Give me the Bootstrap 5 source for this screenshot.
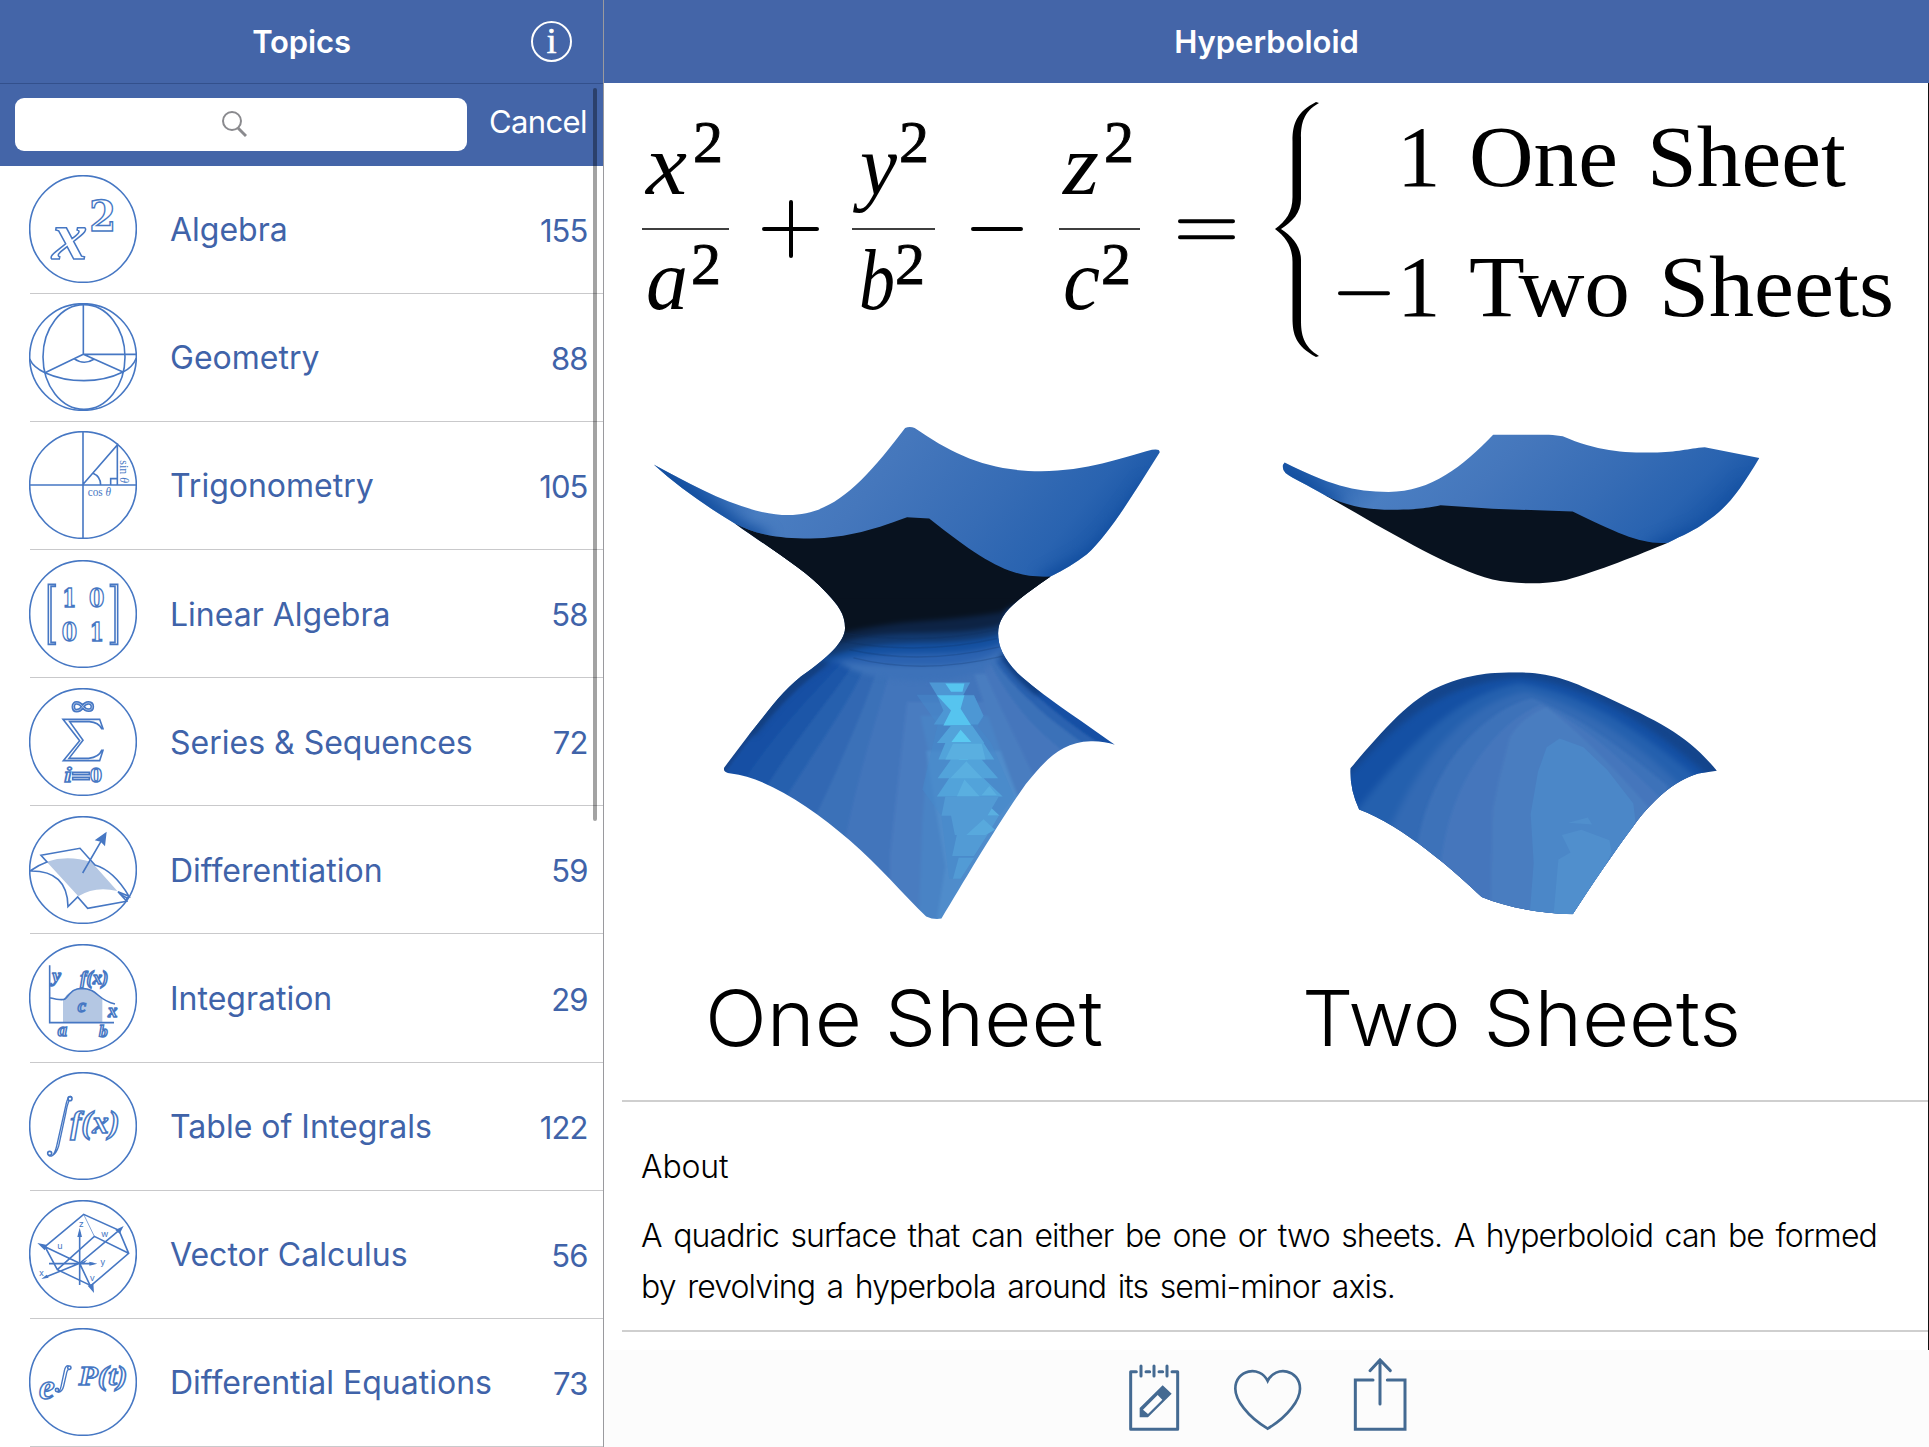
<!DOCTYPE html>
<html lang="en">
<head>
<meta charset="utf-8">
<meta name="viewport" content="width=device-width, initial-scale=1">
<title>Hyperboloid</title>
<link href="https://cdn.jsdelivr.net/npm/bootstrap@5.3.0/dist/css/bootstrap.min.css" rel="stylesheet">
<style>
  :root { --bar: #4465a8; --ink: #4063a9; --line: #c9c9cb; --tool: #446a92; }
  body { font-family: Inter, "Liberation Sans", sans-serif; background: #fff; height: 1447px; overflow: hidden; }
  .topics-pane { width: 604px; border-right: 1px solid #9a9a9e; }
  .top-bar { height: 83px; background: var(--bar); color: #fff; font-size: 31px; font-weight: 600; line-height: 1; }
  .topics-pane .top-bar { letter-spacing: -.15px; }
  .detail-pane .top-bar { letter-spacing: 0; }
  .info-btn { right: 30px; top: 20px; width: 43px; height: 43px; }
  .search-bar { height: 83px; background: var(--bar); border-top: 1px solid #33508c; padding: 0 16px 0 15px; }
  .search-field { width: 452px; height: 53px; border-radius: 9px; margin-top: -1px; padding-right: 14px; }
  .cancel-link { font-size: 31px; letter-spacing: -.6px; line-height: 1; padding-bottom: 6px; }
  .topic-row { height: 128.15px; margin-left: 30px; padding-right: 15.5px; border-bottom: 1px solid var(--line); color: var(--ink); font-size: 32px; line-height: 1; }
  .topic-name, .topic-count { padding-top: 2px; }
  .topic-icon { width: 108px; height: 108px; margin: 0 33px 0 -1px; fill: none; stroke: #4677c3; stroke-width: 4.8; flex: none; }
  .topic-icon text { font-family: "DejaVu Serif", serif; stroke-width: 4.5; }
  .topic-icon .bold-num { font-weight: bold; }
  .topic-icon .it { font-family: "Liberation Serif", serif; font-style: italic; font-weight: bold; }
  .topic-icon .solid { fill: #4677c3; stroke: none; font-weight: normal; }
  .topic-icon .serif-label { font-family: "Liberation Serif", serif; }
  .topic-icon .axis-label { font-family: Inter, sans-serif; }
  .topic-icon .tint { fill: #b4c7e3; stroke: none; }
  .topic-count { font-size: 31px; letter-spacing: -.9px; }
  .scroll-thumb { left: 593px; top: 88px; width: 4px; height: 733px; border-radius: 2px; background: rgba(0,0,0,.36); }
  .page-body { border-right: 1px solid #111; height: 1267px; }
  .figure-box { height: 1017px; }
  .about-box { margin-left: 18px; height: 232px; border-top: 2px solid #cfcfcf; border-bottom: 2px solid #cfcfcf; padding: 39px 0 0 19px; color: #000; font-weight: 300; font-size: 32px; line-height: 51px; white-space: nowrap; }
  .about-box h2 { font-size: 32px; font-weight: 300; line-height: 51px; margin-bottom: 18px; letter-spacing: -.15px; }
  .about-box p { letter-spacing: -.9px; word-spacing: 3.4px; }
  .tool-bar { height: 97px; background: #fcfcfc; padding: 0 0 7px 13px; }
  .tool-bar svg { fill: none; stroke: var(--tool); stroke-width: 9; stroke-linecap: round; stroke-linejoin: round; }
  .math text { font-family: "Liberation Serif", serif; font-size: 87px; fill: #000; }
  .math .var { font-style: italic; }
  .math .sup { font-size: 60px; stroke: #000; stroke-width: .9; }
  .caption-text { font-family: Inter, sans-serif; font-weight: 300; font-size: 77px; }
</style>
</head>
<body class="d-flex">

<aside class="topics-pane position-relative flex-shrink-0 d-flex flex-column">
  <header class="top-bar position-relative d-flex align-items-center justify-content-center">
    <span>Topics</span>
    <svg class="info-btn position-absolute" viewBox="0 0 43 43" fill="none" stroke="#fff" stroke-width="2"><circle cx="21.500" cy="21.500" r="19.500"/><text x="21.500" y="32.500" text-anchor="middle" font-family="Liberation Serif, serif" font-size="35" font-weight="400" fill="#fff" stroke="#fff" stroke-width=".7">i</text></svg>
  </header>
  <div class="search-bar d-flex align-items-center justify-content-between">
    <div class="search-field bg-white d-flex align-items-center justify-content-center">
      <svg width="26" height="28" viewBox="0 0 26 28" fill="none" stroke="#8a8a8e"><circle cx="11" cy="11" r="9" stroke-width="2"/><path d="M17 18l8 8" stroke-width="3"/></svg>
    </div>
    <span class="cancel-link text-white">Cancel</span>
  </div>
  <div class="topic-list">
    <div class="topic-row d-flex align-items-center">
      <svg class="topic-icon" viewBox="87 47 324 324"><circle cx="249" cy="209" r="160"/><text class="it" x="156" y="299" font-size="205" textLength="106" lengthAdjust="spacingAndGlyphs">x</text><text class="bold-num" x="268" y="215" font-size="128" textLength="80" lengthAdjust="spacingAndGlyphs">2</text></svg>
      <span class="topic-name flex-grow-1">Algebra</span><span class="topic-count">155</span>
    </div>
    <div class="topic-row d-flex align-items-center">
      <svg class="topic-icon" viewBox="87 432 324 324"><circle cx="249" cy="594" r="160"/><ellipse cx="252" cy="594" rx="123" ry="157"/><path d="M89 600Q100 625 135 641Q188 665 252 665T369 639Q398 625 409 597M250 437V586H409M250 586L135 641M250 586L369 639M222 599Q252 620 283 600"/></svg>
      <span class="topic-name flex-grow-1">Geometry</span><span class="topic-count">88</span>
    </div>
    <div class="topic-row d-flex align-items-center">
      <svg class="topic-icon" viewBox="87 816 324 324"><circle cx="249" cy="978" r="160"/><path d="M249 818V1138M89 978H409M250 975L352 858V978M279 943Q302 953 302 978M332 978V959H352"/><text class="solid serif-label" x="263" y="1011" font-size="36" textLength="70" lengthAdjust="spacingAndGlyphs">cos <tspan font-style="italic">θ</tspan></text><text class="solid serif-label" transform="translate(361 904) rotate(90)" font-size="36" textLength="68" lengthAdjust="spacingAndGlyphs">sin <tspan font-style="italic">θ</tspan></text></svg>
      <span class="topic-name flex-grow-1">Trigonometry</span><span class="topic-count">105</span>
    </div>
    <div class="topic-row d-flex align-items-center">
      <svg class="topic-icon" viewBox="87 30 324 324"><circle cx="249" cy="192" r="160"/><path d="M166 103H145V283H166V277H153V109H166ZM331 103H353V283H331V277H345V109H331Z"/><g font-size="80"><text class="bold-num" x="187" y="171" textLength="42" lengthAdjust="spacingAndGlyphs">1</text><text class="bold-num" x="267" y="171" textLength="46" lengthAdjust="spacingAndGlyphs">0</text><text class="bold-num" x="185" y="273" textLength="46" lengthAdjust="spacingAndGlyphs">0</text><text class="bold-num" x="269" y="273" textLength="42" lengthAdjust="spacingAndGlyphs">1</text></g></svg>
      <span class="topic-name flex-grow-1">Linear Algebra</span><span class="topic-count">58</span>
    </div>
    <div class="topic-row d-flex align-items-center">
      <svg class="topic-icon" viewBox="87 415 324 324"><circle cx="249" cy="577" r="160"/><path d="M189 509H299L309 537H305Q296 518 268 516H209L249 572L207 626H266Q297 622 305 602H309L299 633H190L239 573Z"/><path d="M248 471C238 457 220 455 220 471S238 487 248 471S277 457 277 471S258 485 248 471Z" stroke-width="11"/><path d="M248 471C238 457 220 455 220 471S238 487 248 471S277 457 277 471S258 485 248 471Z" stroke="#c9d8ef" stroke-width="2"/><text class="it" x="193" y="697" font-size="66" textLength="22" lengthAdjust="spacingAndGlyphs">i</text><path d="M218 668H268V675H218ZM218 683H268V690H218Z"/><text class="bold-num" x="270" y="697" font-size="58" textLength="36" lengthAdjust="spacingAndGlyphs">0</text></svg>
      <span class="topic-name flex-grow-1">Series &amp; Sequences</span><span class="topic-count">72</span>
    </div>
    <div class="topic-row d-flex align-items-center">
      <svg class="topic-icon" viewBox="87 799 324 324"><circle cx="249" cy="961" r="160"/><path class="tint" d="M140 936Q205 915 275 938L352 1024Q285 1008 235 1040Z"/><path d="M90 964Q115 946 141 937L123 917L240 896L285 946Q342 963 387 1040L354 1026L380 1055L263 1076L233 1042L204 1071Q203 962 90 964M387 1040L376 1053M358 1032L384 1047M248 970L306 870"/><path class="solid" d="M320 846L315 890L302 876L284 872Z"/></svg>
      <span class="topic-name flex-grow-1">Differentiation</span><span class="topic-count">59</span>
    </div>
    <div class="topic-row d-flex align-items-center">
      <svg class="topic-icon" viewBox="87 44 324 324"><circle cx="249" cy="206" r="160"/><path class="tint" d="M189 280V211Q215 175 245 177Q280 178 307 207V280Z"/><path d="M149 108V280H342M149 205Q185 214 195 209C215 188 220 178 245 177C295 178 290 212 345 224"/><text class="it" x="157" y="157" font-size="58">y</text><text class="it" x="241" y="164" font-size="54" textLength="84" lengthAdjust="spacingAndGlyphs">f(x)</text><text class="it" x="233" y="248" font-size="56">c</text><text class="it" x="324" y="263" font-size="56">x</text><text class="it" x="173" y="320" font-size="56">a</text><text class="it" x="297" y="324" font-size="52">b</text></svg>
      <span class="topic-name flex-grow-1">Integration</span><span class="topic-count">29</span>
    </div>
    <div class="topic-row d-flex align-items-center">
      <svg class="topic-icon" viewBox="87 428 324 324"><circle cx="249" cy="590" r="160"/><path d="M207 503Q201 510 197 530L170 650Q164 676 155 680Q148 682 145 676M207 515Q202 525 198 548L176 650Q169 673 157 678M207 503Q213 499 215 505" stroke-width="4"/><circle cx="210" cy="508" r="6"/><circle cx="149" cy="672" r="6"/><text class="it" x="211" y="612" font-size="94" textLength="148" lengthAdjust="spacingAndGlyphs">f(x)</text></svg>
      <span class="topic-name flex-grow-1">Table of Integrals</span><span class="topic-count">122</span>
    </div>
    <div class="topic-row d-flex align-items-center">
      <svg class="topic-icon" viewBox="87 813 324 324"><circle cx="249" cy="975" r="160"/><path d="M135 953L251 856L357 904L386 973L273 1070L172 1022L135 953L239 1003L357 904M172 1022L283 922L386 973"/><path d="M251 856L283 922" stroke-width="2"/><path d="M239 1068V910M147 1004H280M239 1003L135 1045M239 1003L273 1075"/><path class="solid" d="M239 896L246 924H232ZM112 942L142 948L134 964ZM371 891L359 914L346 903ZM292 1004L268 998V1010ZM124 1050L140 1037L146 1046ZM282 1092L263 1070L280 1063ZM239 1003L262 992L250 1006Z"/><g font-size="27"><text class="solid axis-label" x="236" y="893">z</text><text class="solid axis-label" x="303" y="924">w</text><text class="solid axis-label" x="172" y="960">u</text><text class="solid axis-label" x="301" y="1008">y</text><text class="solid axis-label" x="117" y="1040">x</text><text class="solid axis-label" x="269" y="1055">v</text></g></svg>
      <span class="topic-name flex-grow-1">Vector Calculus</span><span class="topic-count">56</span>
    </div>
    <div class="topic-row d-flex align-items-center">
      <svg class="topic-icon" viewBox="87 1196 324 324"><circle cx="249" cy="1358" r="160"/><text class="it" x="117" y="1408" font-size="106">e</text><path d="M206 1309Q196 1308 193 1325L183 1372Q180 1387 171 1388M206 1320Q201 1322 199 1335L191 1370Q187 1388 174 1389" stroke-width="4"/><circle cx="208" cy="1315" r="5"/><circle cx="171" cy="1382" r="5"/><text class="it" x="236" y="1368" font-size="82" textLength="146" lengthAdjust="spacingAndGlyphs">P(t)</text></svg>
      <span class="topic-name flex-grow-1">Differential Equations</span><span class="topic-count">73</span>
    </div>
  </div>
  <div class="scroll-thumb position-absolute"></div>
</aside>

<main class="detail-pane flex-grow-1 d-flex flex-column">
  <header class="top-bar d-flex align-items-center justify-content-center"><span>Hyperboloid</span></header>
  <div class="page-body">
    <svg class="figure-box d-block" width="1324" height="1017" viewBox="604 83 1324 1017">
      <defs>
        <linearGradient id="bowl" x1="0" x2="1" y1="0" y2=".25"><stop offset="0" stop-color="#1450a4"/><stop offset=".16" stop-color="#2560ae"/><stop offset=".33" stop-color="#4a7ec2"/><stop offset=".5" stop-color="#4577bc"/><stop offset=".75" stop-color="#366cb5"/><stop offset=".92" stop-color="#2963b0"/><stop offset="1" stop-color="#1d59a9"/></linearGradient>
        <filter id="fine" x="-5%" y="-5%" width="110%" height="110%"><feGaussianBlur stdDeviation="3.500"/></filter>
        <filter id="soft" x="-20%" y="-20%" width="140%" height="140%" color-interpolation-filters="sRGB"><feGaussianBlur stdDeviation="8"/></filter>
        <filter id="wide" x="-40%" y="-40%" width="180%" height="180%" color-interpolation-filters="sRGB"><feGaussianBlur stdDeviation="20"/></filter>
        <clipPath id="body1"><path d="M300 352C400 430 480 480 540 550C570 585 588 610 588 650C588 690 540 735 490 775C430 820 400 870 340 950L272 1048Q268 1062 290 1065C380 1075 500 1160 600 1255C680 1330 740 1410 800 1472Q820 1482 840 1478C900 1370 980 1220 1060 1095C1110 1030 1150 975 1230 973Q1265 972 1293 983C1200 910 1100 840 1040 780C1000 735 988 700 988 665C988 610 1030 575 1125 503L808 330L750 330Z"/></clipPath>
        <clipPath id="bowl1"><path d="M88 184C200 250 330 328 440 328C560 328 640 230 745 80Q757 74 770 80C870 155 960 203 1100 203C1220 203 1310 165 1390 142Q1412 138 1410 150C1340 270 1280 380 1220 440C1190 465 1160 485 1125 503C1030 510 960 470 808 338L750 334C650 375 580 395 480 395C400 393 350 380 300 352C220 300 150 245 88 184Z"/></clipPath>
        <clipPath id="bowl2"><path d="M80 178C180 240 240 262 320 262C420 260 490 190 562 98H690L722 103C800 145 860 150 930 150C990 150 1010 138 1050 135L1176 165C1130 260 1100 310 1050 350C1030 370 1000 385 965 407C900 412 850 380 745 318L560 310L440 300C400 310 380 313 310 313C260 310 220 300 175 273C130 240 100 225 82 208Q70 190 80 178Z"/></clipPath>
        <clipPath id="dome"><path d="M232 1050C300 950 370 850 440 815C510 780 560 776 620 776C700 778 740 800 820 845C950 920 1010 955 1078 1057L1035 1065C980 1085 930 1140 885 1215C840 1290 790 1380 745 1466C680 1464 600 1450 535 1417C480 1350 350 1210 252 1167Q230 1110 232 1050Z"/></clipPath>
      </defs>

      <!-- equation -->
      <g class="math">
        <text class="var" x="646" y="194" textLength="41" lengthAdjust="spacingAndGlyphs">x</text><text class="sup" x="693" y="162">2</text>
        <text class="var" x="646" y="309" textLength="42" lengthAdjust="spacingAndGlyphs">a</text><text class="sup" x="691" y="284">2</text>
        <text class="var" x="860" y="194" textLength="37" lengthAdjust="spacingAndGlyphs">y</text><text class="sup" x="899" y="162">2</text>
        <text class="var" x="859" y="309" textLength="36" lengthAdjust="spacingAndGlyphs">b</text><text class="sup" x="895" y="284">2</text>
        <text class="var" x="1063" y="194" textLength="36" lengthAdjust="spacingAndGlyphs">z</text><text class="sup" x="1104" y="162">2</text>
        <text class="var" x="1063" y="309" textLength="37" lengthAdjust="spacingAndGlyphs">c</text><text class="sup" x="1101" y="284">2</text>
        <g stroke="#000" fill="none"><path d="M642 229H729M852 229H935M1059 229H1140" stroke-width="1.600"/><path d="M764 229H817M791 202V256M973 229H1021M1180 221.300H1233M1180 237.300H1233M1340 293.300H1388" stroke-width="4" stroke-linecap="round"/></g>
        <path d="M1319 103C1303 112 1301 124 1301 138V199C1301 213 1292 222 1281 229C1292 236 1301 246 1301 260V320C1301 334 1303 346 1319 356L1316 357C1296 346 1292.500 335 1292.500 318V262C1292.500 247 1286 237 1275 229C1286 221 1292.500 212 1292.500 197V141C1292.500 123 1297 112 1316 102Z"/>
        <text x="1397" y="186">1</text><text x="1397" y="316">1</text>
        <text x="1469" y="186" textLength="149" lengthAdjust="spacingAndGlyphs">One</text><text x="1647" y="186" textLength="199" lengthAdjust="spacingAndGlyphs">Sheet</text>
        <text x="1469" y="316" textLength="161" lengthAdjust="spacingAndGlyphs">Two</text><text x="1659" y="316" textLength="235" lengthAdjust="spacingAndGlyphs">Sheets</text>
      </g>

      <!-- hyperboloid of one sheet -->
      <g transform="translate(620 400) scale(.3827 .3508)">
        <g clip-path="url(#body1)">
          <g filter="url(#fine)" color-interpolation-filters="sRGB">
          <path fill="#14458c" d="M200 300H1400V1500H200Z"/>
          <path fill="#1450a4" d="M600 690C540 760 400 860 270 1070V1500H1400V690Z"/>
          <path fill="#1c56a8" d="M615 690C590 760 470 850 320 1090V1500H1400V690Z"/>
          <path fill="#2660ae" d="M635 690C615 780 510 880 370 1125V1500H1400V690Z"/>
          <path fill="#3068b3" d="M660 690C640 800 550 930 420 1155V1500H1400V690Z"/>
          <path fill="#3b71b8" d="M690 690C670 800 600 980 505 1200V1500H1400V690Z"/>
          <path fill="#4275bb" d="M720 690C710 800 630 1000 580 1300V1500H1400V690Z"/>
          <path fill="#487cc0" d="M750 860C740 950 725 1100 705 1300V1500H1400V860Z"/>
          <path fill="#4a83c5" d="M785 900L805 1000L790 1200L780 1500H1400V900Z"/>
          <path fill="#508ccb" d="M800 1000L830 1200L850 1330L825 1500H1400V1000Z"/>
          <path fill="#497dc0" d="M925 780C960 900 1000 1020 1040 1130L1400 1200V780Z"/>
          <path fill="#4476bc" d="M940 740C980 850 1030 950 1080 1070H1400V740Z"/>
          <path fill="#3b71b8" d="M955 720C1000 830 1070 930 1170 1010H1400V720Z"/>
          <path fill="#2962b0" d="M965 720C1020 820 1130 920 1220 985H1400V720Z"/>
          <path fill="#1450a4" d="M980 710C1040 810 1150 905 1260 985H1400V710Z"/>
          </g>
          <g filter="url(#soft)">
            <path fill="none" stroke="#123f80" stroke-width="24" d="M580 700Q540 745 490 778C430 822 400 872 340 952M995 710Q1030 780 1100 835"/>
            <path fill="#3d72b9" d="M560 560H1010V710Q960 800 790 800T560 735Z"/>
            <path fill="#2b62b0" d="M560 560H1010V700Q960 757 790 757T540 745Z"/>
            <path fill="#1450a0" d="M560 560H1010V685Q960 722 790 722T530 750Z"/>
            <path fill="#12396f" d="M560 560H1010V660Q960 690 790 692T540 735Z"/>
            <path fill="#0d2344" d="M560 560H1010V635Q960 662 790 664T560 700Z"/>
            <path fill="#08121f" d="M250 300H1200V500L1000 605Q900 622 790 630T580 665Z"/>
          </g>
          <path d="M590 690Q790 728 985 680M600 712Q790 757 995 703M585 665Q790 700 985 655M610 735Q790 785 1000 730" fill="none" stroke="#0c2d5c" stroke-opacity=".22" stroke-width="4"/>
          <path fill="#08121f" d="M250 300H1200V480L1050 565H560Z"/>
          <g fill="#4d97d4">
            <path fill="#4589cb" d="M775 840H925L950 905L935 930L970 978L1030 1130L990 1185L890 1365H860L840 1185L790 1110L830 925Z" opacity=".5"/>
            <path d="M808 805H915L895 845H830Z"/><path d="M828 842H925L950 900L935 925H820L845 885Z"/>
            <path fill="#56c4ef" d="M850 808H900L895 832H865ZM828 842H900L890 880L918 928H845L865 885Z"/>
            <path fill="#52a3da" d="M865 928H920L952 978H828ZM850 978H950L978 1025H832ZM865 1025H945L988 1078H830ZM860 1078H950L1000 1130H828Z"/>
            <path fill="#5bcaf1" d="M890 940L918 975H866ZM898 1005L910 1025H885Z"/>
            <path fill="#5aafe0" d="M870 980H945L955 1025H850ZM905 1030L947 1078H863ZM900 1082L940 1130H880ZM965 1100L985 1127H945ZM945 1137L992 1185H895Z"/>
            <path fill="#529bd5" d="M850 1130H990L960 1185H840ZM865 1185H990L960 1240H875ZM880 1240H960L925 1300H868ZM885 1305H925L890 1365H870Z"/>
            <path fill="#58a9dd" d="M950 1195L980 1225L955 1240H905Z"/>
          </g>
        </g>
        <g clip-path="url(#bowl1)">
          <path fill="url(#bowl)" d="M88 70H1412V510H88Z"/>
          <path fill="none" stroke="#0f4b9c" stroke-width="40" filter="url(#wide)" d="M1390 240C1340 320 1285 410 1220 460L1110 520M80 190L310 365L380 400"/>
        </g>
      </g>

      <!-- hyperboloid of two sheets -->
      <g transform="translate(1250 400) scale(.4331 .3508)">
        <path fill="#08121f" d="M175 273C300 360 450 475 560 512C610 526 680 526 730 513C800 490 900 440 965 407L800 300L440 290Z"/>
        <g clip-path="url(#bowl2)">
          <path fill="url(#bowl)" d="M70 90H1180V420H70Z"/>
          <path fill="none" stroke="#0f4b9c" stroke-width="36" filter="url(#wide)" d="M1165 240C1130 290 1100 330 1055 375L930 430M70 200L200 300"/>
        </g>
        <g clip-path="url(#dome)">
          <path fill="#14458c" d="M200 750H1100V1480H200Z"/>
          <g filter="url(#soft)">
            <path fill="#1450a4" d="M205 1100C330 930 430 810 620 790C780 805 950 945 1065 1080L900 1500H200Z"/>
            <path fill="#2460ae" d="M240 1180C380 960 480 840 620 808C770 830 920 960 1030 1075L900 1500H200Z"/>
            <path fill="#336ab4" d="M320 1230C400 1000 510 860 635 832C755 860 890 970 990 1095L900 1500H300Z"/>
          </g>
          <g filter="url(#fine)" color-interpolation-filters="sRGB">
          <path fill="#3d72b9" d="M385 1280C410 1060 530 890 650 850C770 905 870 1005 965 1100L900 1500H385Z"/>
          <path fill="#4476bc" d="M440 1330C460 1080 570 920 670 868C775 925 865 1035 945 1130L900 1500H440Z"/>
          <path fill="#497dc0" d="M555 1450L560 1170L575 1080L600 960Q630 900 685 875Q790 975 920 1160L800 1500Z"/>
          </g>
          <path fill="#4b87c8" d="M645 1480L655 1320L648 1180L665 1060L685 990L715 965L770 990L825 1055L885 1150L890 1200L800 1500Z"/>
          <path fill="#508fcd" d="M700 1480L712 1310L740 1290L720 1240L765 1225L830 1255L835 1290L760 1480ZM735 1205L780 1190L790 1210Z"/>
        </g>
      </g>

      <text class="caption-text" x="705" y="1045.500" textLength="398" lengthAdjust="spacingAndGlyphs">One Sheet</text>
      <text class="caption-text" x="1302" y="1045.500" textLength="439" lengthAdjust="spacingAndGlyphs">Two Sheets</text>
    </svg>
    <section class="about-box">
      <h2>About</h2>
      <p class="mb-0">A quadric surface that can either be one or two sheets. A hyperboloid can be formed<br>by revolving a hyperbola around its semi-minor axis.</p>
    </section>
  </div>
  <footer class="tool-bar d-flex align-items-center justify-content-center">
    <svg width="292" height="84" viewBox="80 100 876 252">
      <path d="M108 156H91V329H232V156H215M137 156H148M176 156H187M122 139V169M161 139V169M200 139V169"/>
      <path d="M187 197L214 222L143 293H118V265ZM172 226L128 270L143 283L186 240Z" fill="#446a92" fill-rule="evenodd" stroke="none"/>
      <path d="M502 327C440 290 405 240 405 207C405 150 478 135 502 184C526 135 599 150 599 207C599 240 564 290 502 327Z" stroke-width="8" stroke-linejoin="miter"/>
      <path d="M818 181H765V329H914V181H861M839 253V121M809 153L839 121L870 153" stroke-linejoin="miter"/>
    </svg>
  </footer>
</main>
<script src="https://cdn.jsdelivr.net/npm/bootstrap@5.3.0/dist/js/bootstrap.bundle.min.js"></script>
</body>
</html>
